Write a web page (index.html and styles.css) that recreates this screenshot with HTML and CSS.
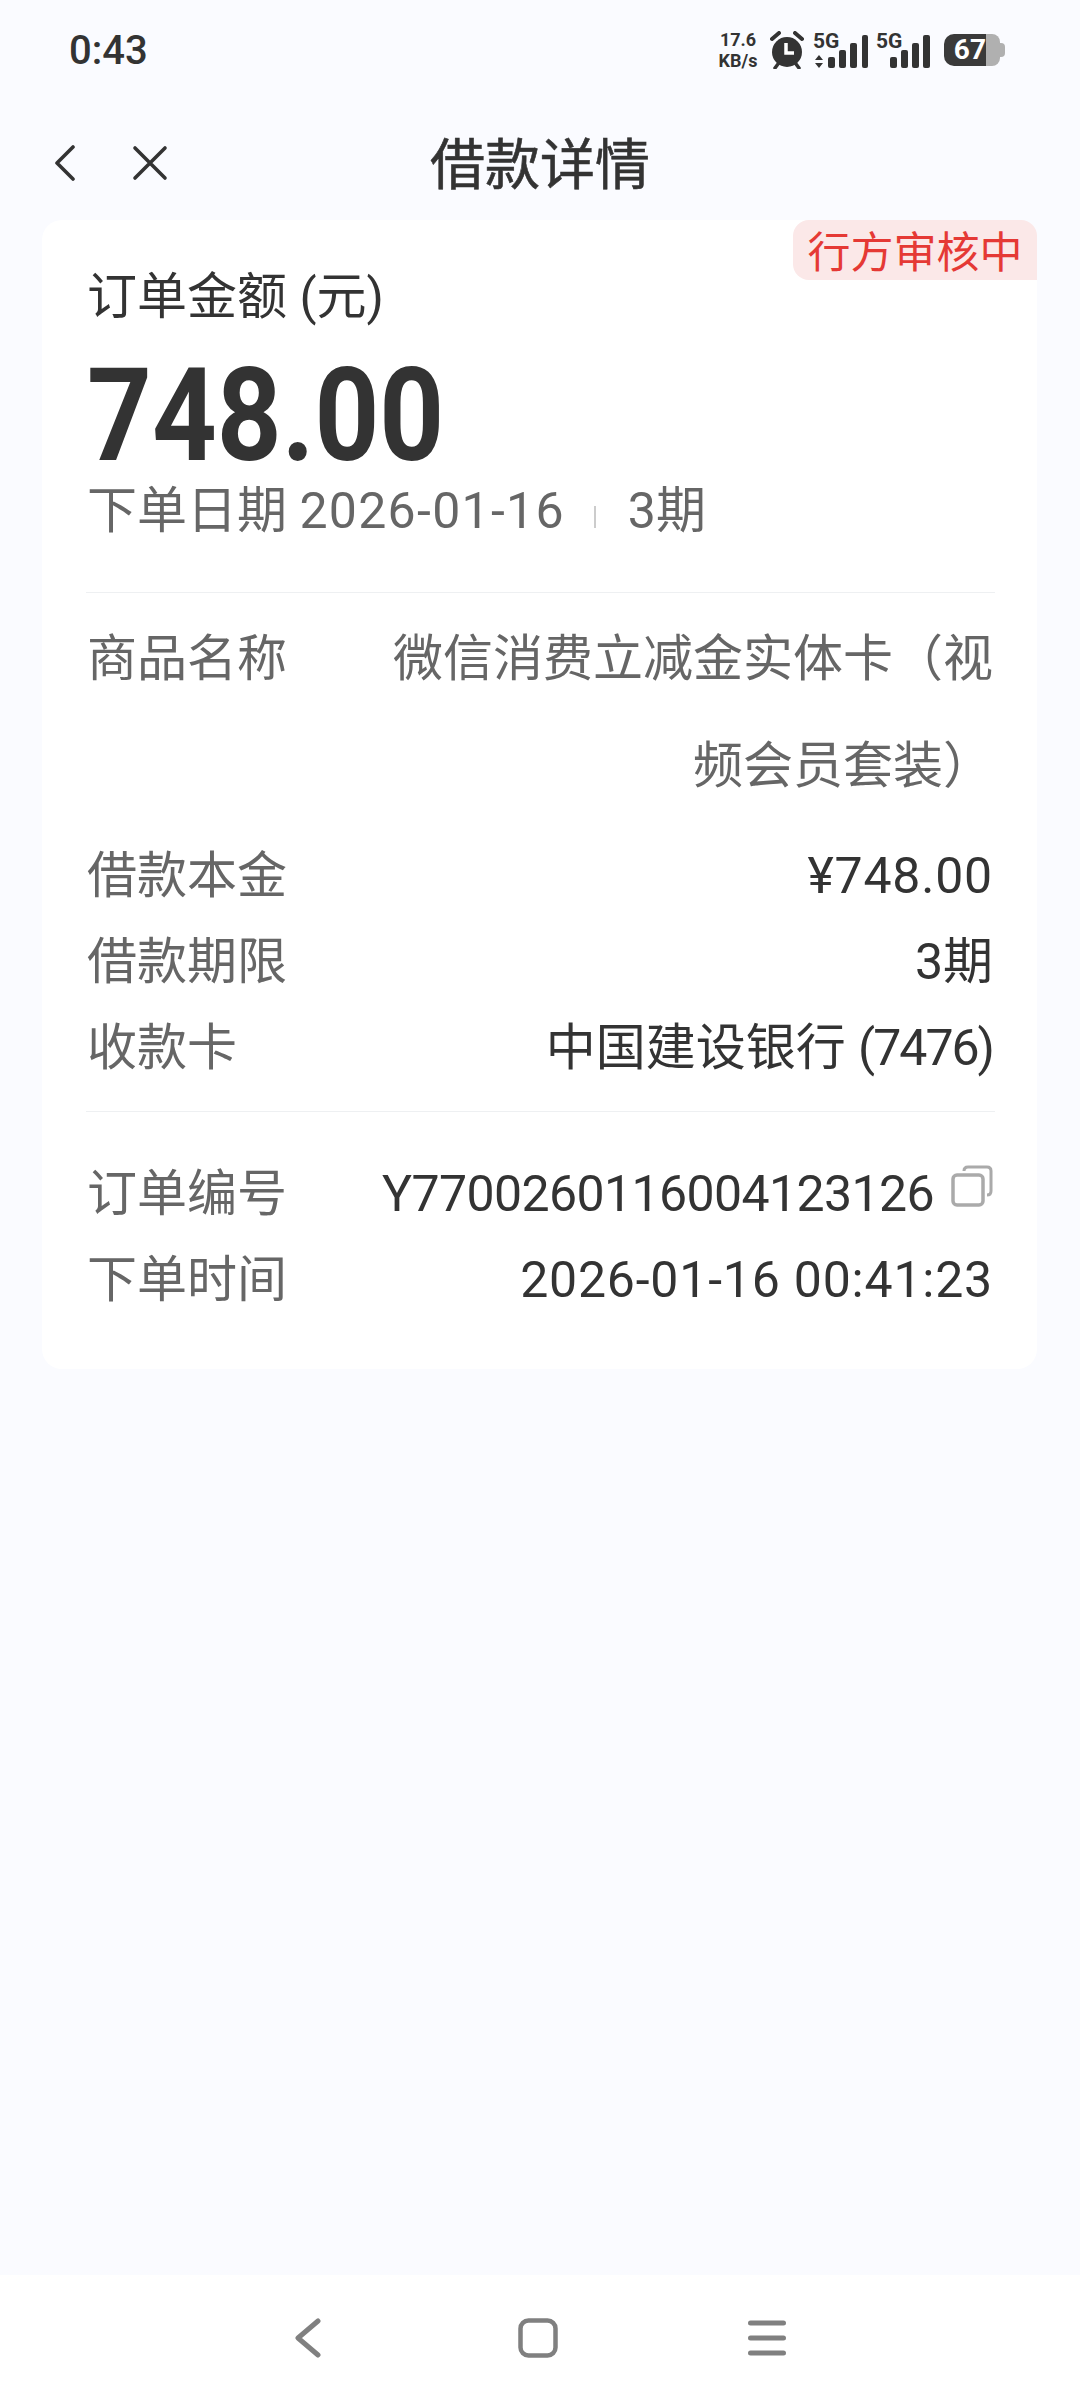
FILE: index.html

```html
<!DOCTYPE html>
<html lang="zh-CN">
  <head>
    <meta charset="utf-8" />
    <title>借款详情</title>
    <link rel="stylesheet" href="styles.css">
  </head>

  <body>
    <!-- status bar -->
    <div class="status-bar">
      <span class="clock">0:43</span>
      <div class="status-icons">
        <div class="speed"><b>17.6</b><b>KB/s</b></div>
        <svg class="alarm" width="34" height="38" viewBox="0 0 34 38">
          <circle cx="17" cy="21" r="15" fill="#333"/>
          <path d="M2 8 L9 2 M32 8 L25 2" stroke="#333" stroke-width="4" stroke-linecap="round"/>
          <path d="M8 33 L5 37 M26 33 L29 37" stroke="#333" stroke-width="3.5" stroke-linecap="round"/>
          <path d="M16 12 V22 H24" stroke="#fff" stroke-width="3.5" fill="none"/>
        </svg>
        <svg class="signal" width="118" height="40" viewBox="0 0 118 40">
          <text x="0" y="18" class="signal-text">5G</text>
          <path d="M6 25 L10 30 H2 Z M6 38 L10 33 H2 Z" fill="#333"/>
          <rect x="15" y="27" width="7" height="11" rx="2" fill="#333"/>
          <rect x="26" y="20" width="7" height="18" rx="2" fill="#333"/>
          <rect x="37" y="13" width="7" height="25" rx="2" fill="#333"/>
          <rect x="49" y="5" width="6" height="33" rx="2" fill="#333"/>
          <text x="63" y="18" class="signal-text">5G</text>
          <rect x="77" y="27" width="7" height="11" rx="2" fill="#333"/>
          <rect x="88" y="20" width="7" height="18" rx="2" fill="#333"/>
          <rect x="99" y="13" width="7" height="25" rx="2" fill="#333"/>
          <rect x="110" y="5" width="7" height="33" rx="2" fill="#333"/>
        </svg>
        <div class="battery">
          <div class="battery-level">67</div>
          <div class="battery-rest"></div>
          <div class="battery-nub"></div>
        </div>
      </div>
    </div>

    <!-- title bar -->
    <div class="nav-bar">
      <div class="nav-left">
        <svg width="22" height="36" viewBox="0 0 22 36">
          <path d="M19 2 L3 18 L19 34" fill="none" stroke="#333" stroke-width="3.6" stroke-linecap="round" stroke-linejoin="round"/>
        </svg>
        <svg width="36" height="36" viewBox="0 0 36 36">
          <path d="M3 3 L33 33 M33 3 L3 33" fill="none" stroke="#333" stroke-width="3.6" stroke-linecap="round"/>
        </svg>
      </div>
      <h1 class="nav-title">借款详情</h1>
    </div>

    <!-- order card -->
    <main class="page">
      <div class="card">
        <div class="badge">行方审核中</div>

        <div class="amount-label">订单金额 (元)</div>
        <div class="amount"><span class="amount-num">748.00</span></div>
        <div class="order-date">
          <span>下单日期 <span class="date-num">2026-01-16</span></span>
          <i class="date-sep"></i>
          <span>3期</span>
        </div>

        <div class="divider first"></div>

        <div class="row tall">
          <span class="row-label">商品名称</span>
          <span class="row-value muted">微信消费立减金实体卡（视频会员套装）</span>
        </div>
        <div class="row">
          <span class="row-label">借款本金</span>
          <span class="row-value wide-num">¥748.00</span>
        </div>
        <div class="row">
          <span class="row-label">借款期限</span>
          <span class="row-value">3期</span>
        </div>
        <div class="row">
          <span class="row-label">收款卡</span>
          <span class="row-value">中国建设银行 <span class="card-tail">(7476)</span></span>
        </div>

        <div class="divider second"></div>

        <div class="row">
          <span class="row-label">订单编号</span>
          <span class="row-value order-no">
            <span class="order-num">Y7700260116004123126</span>
            <svg class="copy-icon" width="42" height="42" viewBox="0 0 42 42">
              <path d="M13 6 Q13 2 17 2 H36 Q40 2 40 6 V26 Q40 30 36 30" fill="none" stroke="#aaa" stroke-width="3"/>
              <rect x="2" y="10" width="30" height="30" rx="4" fill="#fff" stroke="#aaa" stroke-width="3.5"/>
            </svg>
          </span>
        </div>
        <div class="row">
          <span class="row-label">下单时间</span>
          <span class="row-value wide-num">2026-01-16 00:41:23</span>
        </div>
      </div>
    </main>

    <!-- system navigation -->
    <div class="system-nav">
      <svg class="nav-back" width="26" height="40" viewBox="0 0 26 40">
        <path d="M23 3 L3 20 L23 37" fill="none" stroke="#808080" stroke-width="5" stroke-linecap="round" stroke-linejoin="round"/>
      </svg>
      <svg width="40" height="40" viewBox="0 0 40 40">
        <rect x="2.5" y="2.5" width="35" height="35" rx="8" fill="none" stroke="#808080" stroke-width="4.5"/>
      </svg>
      <svg width="38" height="36" viewBox="0 0 38 36">
        <path d="M2.5 3 H35.5 M2.5 18 H35.5 M2.5 33 H35.5" fill="none" stroke="#808080" stroke-width="5" stroke-linecap="round"/>
      </svg>
    </div>
  </body>
</html>
```

FILE: styles.css

```css
* {
  box-sizing: border-box;
}

body {
  margin: 0;
  min-height: 2400px;
  display: flex;
  flex-direction: column;
  background-color: #fafbff;
  color: #333;
  font-family: Roboto, "Noto Sans CJK SC", sans-serif;
}

/* status bar */
.status-bar {
  height: 100px;
  padding: 0 75px 0 69px;
  display: flex;
  align-items: center;
  justify-content: space-between;
}

.clock {
  font-size: 40px;
  font-weight: 500;
  color: #333;
}

.status-icons {
  display: flex;
  align-items: center;
}

.speed {
  width: 44px;
  margin-right: 10px;
  display: flex;
  flex-direction: column;
  align-items: center;
  font-size: 18px;
  line-height: 21px;
  white-space: nowrap;
}

.alarm {
  margin-right: 9px;
}

.signal {
  margin-right: 13px;
}

.signal-text {
  font-size: 21px;
  font-weight: 700;
  fill: #333;
}

.battery {
  display: flex;
  align-items: center;
}

.battery-level {
  width: 42px;
  height: 32px;
  border-radius: 10px 0 0 10px;
  background-color: #3a3a3a;
  color: #fff;
  font-size: 28px;
  font-weight: 700;
  line-height: 32px;
  text-align: right;
}

.battery-rest {
  width: 14px;
  height: 32px;
  border-radius: 0 8px 8px 0;
  background-color: #b0b0b0;
}

.battery-nub {
  width: 5px;
  height: 14px;
  border-radius: 0 4px 4px 0;
  background-color: #b0b0b0;
}

/* title bar */
.nav-bar {
  position: relative;
  height: 120px;
  display: flex;
  align-items: center;
  justify-content: center;
}

.nav-left {
  position: absolute;
  left: 54px;
  top: 45px;
  display: flex;
  align-items: center;
  gap: 56px;
}

.nav-title {
  margin: 0;
  font-size: 55px;
  font-weight: 400;
  color: #333;
  -webkit-text-stroke: 0.6px #333;
}

/* order card */
.page {
  flex: 1;
  padding: 0 43px 0 42px;
}

.card {
  position: relative;
  height: 1149px;
  padding: 39px 44px 46px 45px;
  border-radius: 20px;
  background-color: #fff;
}

.badge {
  position: absolute;
  top: 0;
  right: 0;
  width: 244px;
  height: 60px;
  padding-top: 6px;
  border-radius: 16px 16px 0 16px;
  background-color: #fbe8e8;
  color: #e53935;
  font-size: 43px;
  line-height: 54px;
  text-align: center;
}

.amount-label {
  font-size: 50px;
  line-height: 76px;
  color: #333;
}

.amount {
  margin-top: 14px;
  line-height: 134px;
  height: 134px;
}

/* the original digits are narrower than any installed bold */
.amount-num {
  display: inline-block;
  font-size: 130px;
  font-weight: 700;
  color: #333;
  transform: scaleX(0.87);
  transform-origin: left center;
}

.order-date {
  display: flex;
  align-items: center;
  font-size: 50px;
  line-height: 56px;
  color: #666;
}

.date-num {
  letter-spacing: 1.3px;
}

.date-sep {
  width: 2px;
  height: 22px;
  margin: 12px 32px 0 29px;
  background-color: #ccc;
}

.divider {
  height: 1px;
  background-color: #eef0f2;
}

.divider.first {
  margin: 53px -2px 13px -1px;
}

.divider.second {
  margin: 20px -2px 39px -1px;
}

.row {
  display: flex;
  justify-content: space-between;
  font-size: 50px;
  line-height: 86px;
}

.row.tall {
  line-height: 107px;
  margin-bottom: 13px;
}

.row-label {
  flex-shrink: 0;
  color: #666;
}

.row-value {
  width: 604px;
  text-align: right;
  color: #333;
}

.row-value.muted {
  color: #666;
}

.wide-num {
  letter-spacing: 0.8px;
}

.card-tail {
  letter-spacing: -2px;
}

.order-no {
  display: flex;
  justify-content: flex-end;
  white-space: nowrap;
}

.order-num {
  letter-spacing: -0.6px;
}

.copy-icon {
  flex-shrink: 0;
  margin: 14px 0 0 17px;
}

/* system navigation */
.system-nav {
  height: 125px;
  background-color: #fff;
  display: flex;
  align-items: center;
  justify-content: center;
  gap: 190px;
}

.nav-back {
  margin-right: 7px;
}
```
